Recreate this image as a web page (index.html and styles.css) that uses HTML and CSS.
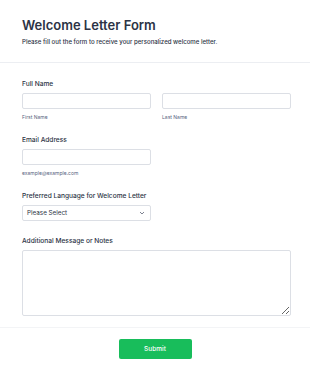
FILE: index.html
```html
<!DOCTYPE html>
<html lang="en">
<head>
    <meta charset="UTF-8">
    <meta name="viewport" content="width=device-width, initial-scale=1.0">
    <title>Welcome Letter Form</title>
    <link rel="stylesheet" href="styles.css">
</head>
<body>
    <form class="form">
        <div class="header">
            <h1 class="title">Welcome Letter Form</h1>
            <p class="subtitle">Please fill out the form to receive your personalized welcome letter.</p>
        </div>

        <div class="fields">
            <div class="field">
                <label class="label">Full Name</label>
                <div class="name-row">
                    <div class="sub">
                        <input class="input" type="text">
                        <span class="sublabel">First Name</span>
                    </div>
                    <div class="sub">
                        <input class="input" type="text">
                        <span class="sublabel">Last Name</span>
                    </div>
                </div>
            </div>

            <div class="field">
                <label class="label">Email Address</label>
                <div class="sub half">
                    <input class="input" type="email">
                    <span class="sublabel">example@example.com</span>
                </div>
            </div>

            <div class="field">
                <label class="label">Preferred Language for Welcome Letter</label>
                <div class="select half">
                    <span>Please Select</span>
                    <svg width="6" height="4" viewBox="0 0 6 4"><path d="M1 1 L3 3 L5 1" fill="none" stroke="#6f7585" stroke-width="0.9"/></svg>
                </div>
            </div>

            <div class="field">
                <label class="label">Additional Message or Notes</label>
                <textarea class="textarea"></textarea>
            </div>
        </div>

        <div class="footer">
            <button type="button" class="submit">Submit</button>
        </div>
    </form>
</body>
</html>
```

FILE: styles.css
```css
body {
    margin: 0;
    background-color: #fff;
    font-family: Inter, "Noto Sans", sans-serif;
    color: #2c3345;
}
.form {
    width: 310px;
}
.header {
    padding: 17px 22px 16px;
    border-bottom: 1px solid #eceef2;
}
.title {
    margin: 0;
    font-size: 13px;
    font-weight: 600;
    line-height: 16px;
}
.subtitle {
    margin: 4px 0 0;
    font-size: 6.1px;
    line-height: 9px;
    font-weight: 500;
}
.fields {
    padding: 16px 19px 11px 22px;
    display: flex;
    flex-direction: column;
    gap: 14px;
}
.field {
    display: flex;
    flex-direction: column;
}
.label {
    font-size: 6.6px;
    font-weight: 500;
    line-height: 10px;
    margin-bottom: 4px;
}
.name-row {
    display: flex;
    gap: 11px;
}
.sub {
    display: flex;
    flex-direction: column;
    flex: 1;
}
.half {
    width: 129px;
}
.input {
    box-sizing: border-box;
    height: 16px;
    width: 100%;
    margin: 0;
    border: 1px solid #dcdfe5;
    border-radius: 2px;
    background: #fff;
}
.sublabel {
    margin-top: 5px;
    font-size: 5px;
    line-height: 7px;
    color: #57647e;
}
.select {
    box-sizing: border-box;
    height: 16px;
    margin-bottom: 1px;
    border: 1px solid #dcdfe5;
    border-radius: 2px;
    display: flex;
    align-items: center;
    justify-content: space-between;
    padding: 0 5px 0 4px;
    font-size: 6.3px;
    color: #2c3345;
}
.textarea {
    box-sizing: border-box;
    width: 269px;
    height: 66px;
    margin: 0;
    border: 1px solid #dcdfe5;
    border-radius: 2px;
    resize: vertical;
}
.footer {
    border-top: 1px solid #f3f4f6;
    padding: 11px 0 16px;
    display: flex;
    justify-content: center;
}
.submit {
    width: 73px;
    height: 20px;
    border: none;
    border-radius: 2px;
    background-color: #18bd5b;
    color: #fff;
    font-family: Inter, sans-serif;
    font-size: 6.5px;
    font-weight: 500;
}
```
